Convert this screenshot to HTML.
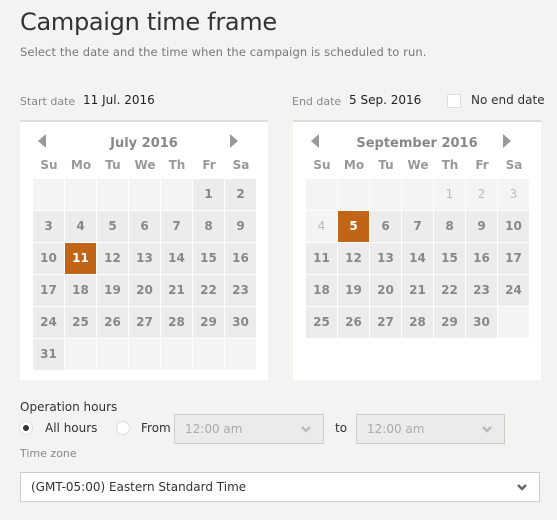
<!DOCTYPE html>
<html><head><style>
*{box-sizing:border-box;margin:0;padding:0}
body{width:557px;height:520px;background:#f3f3f2;font-family:"DejaVu Sans","Liberation Sans",sans-serif;color:#333;position:relative;overflow:hidden}
.abs{position:absolute}
h1{position:absolute;left:20px;top:8px;font-size:24px;font-weight:normal;color:#333;letter-spacing:-0.3px}
.sub{left:20px;top:45px;font-size:11.5px;color:#777;letter-spacing:0.1px}
.lbl{font-size:11px;color:#888}
.val{font-size:12px;color:#222}
.panel{position:absolute;top:120px;width:248px;height:260px;background:#fff;border-top:2px solid #ddd}
.title{position:absolute;top:14px;left:0;width:248px;text-align:center;font-size:13px;font-weight:bold;color:#888}
.arr{position:absolute;top:12px;width:0;height:0;border-top:7px solid transparent;border-bottom:7px solid transparent}
.al{left:18px;border-right:8px solid #999}
.ar{right:30px;border-left:8px solid #999}
.wd{position:absolute;top:36px;left:13px;width:224px;display:flex}
.wd span{width:32px;text-align:center;font-size:12px;font-weight:bold;color:#999}
.grid{position:absolute;top:57px;left:13px;width:224px;display:grid;grid-template-columns:repeat(7,31px);grid-auto-rows:31px;gap:1px}
.grid div{background:#ececec;text-align:center;line-height:31px;font-size:12px;font-weight:bold;color:#888}
.grid .e{background:#f4f4f4}
.grid .d{background:#f4f4f4;color:#bbb;font-weight:normal}
.grid .s{background:#c06515;color:#fff}
.sel{position:absolute;height:30px;border:1px solid #ccc;background:#ebebeb;font-size:12px;color:#aaa;padding-left:10px;line-height:28px}
.chev{position:absolute;right:12px;top:10px}
.radio{position:absolute;width:14px;height:14px;border-radius:50%;border:1px solid #ddd;background:#fff}
</style></head><body>
<h1>Campaign time frame</h1>
<div class="abs sub">Select the date and the time when the campaign is scheduled to run.</div>

<div class="abs lbl" style="left:20px;top:95px">Start date</div>
<div class="abs val" style="left:83px;top:93px">11 Jul. 2016</div>
<div class="abs lbl" style="left:292px;top:95px">End date</div>
<div class="abs val" style="left:349px;top:93px">5 Sep. 2016</div>
<div class="abs" style="left:447px;top:94px;width:14px;height:14px;border:1px solid #ddd;background:#fff;border-radius:2px"></div>
<div class="abs val" style="left:471px;top:93px;color:#333">No end date</div>

<div class="panel" style="left:20px">
<div class="arr al"></div><div class="arr ar"></div>
<div class="title">July 2016</div>
<div class="wd"><span>Su</span><span>Mo</span><span>Tu</span><span>We</span><span>Th</span><span>Fr</span><span>Sa</span></div>
<div class="grid">
<div class="e"></div><div class="e"></div><div class="e"></div><div class="e"></div><div class="e"></div><div>1</div><div>2</div>
<div>3</div><div>4</div><div>5</div><div>6</div><div>7</div><div>8</div><div>9</div>
<div>10</div><div class="s">11</div><div>12</div><div>13</div><div>14</div><div>15</div><div>16</div>
<div>17</div><div>18</div><div>19</div><div>20</div><div>21</div><div>22</div><div>23</div>
<div>24</div><div>25</div><div>26</div><div>27</div><div>28</div><div>29</div><div>30</div>
<div>31</div><div class="e"></div><div class="e"></div><div class="e"></div><div class="e"></div><div class="e"></div><div class="e"></div>
</div></div>

<div class="panel" style="left:293px">
<div class="arr al"></div><div class="arr ar"></div>
<div class="title">September 2016</div>
<div class="wd"><span>Su</span><span>Mo</span><span>Tu</span><span>We</span><span>Th</span><span>Fr</span><span>Sa</span></div>
<div class="grid">
<div class="e"></div><div class="e"></div><div class="e"></div><div class="e"></div><div class="d">1</div><div class="d">2</div><div class="d">3</div>
<div class="d">4</div><div class="s">5</div><div>6</div><div>7</div><div>8</div><div>9</div><div>10</div>
<div>11</div><div>12</div><div>13</div><div>14</div><div>15</div><div>16</div><div>17</div>
<div>18</div><div>19</div><div>20</div><div>21</div><div>22</div><div>23</div><div>24</div>
<div>25</div><div>26</div><div>27</div><div>28</div><div>29</div><div>30</div><div class="e"></div>
</div></div>

<div class="abs val" style="left:20px;top:400px;color:#333">Operation hours</div>
<div class="radio" style="left:19px;top:421px"></div>
<div class="abs" style="left:23px;top:425px;width:6px;height:6px;border-radius:50%;background:#333"></div>
<div class="abs val" style="left:45px;top:421px;color:#333">All hours</div>
<div class="radio" style="left:116px;top:421px"></div>
<div class="abs val" style="left:141px;top:421px;color:#333">From</div>
<div class="sel" style="left:174px;top:414px;width:150px">12:00 am<svg class="chev" width="10" height="8" viewBox="0 0 10 8"><path d="M1 2 L5 6 L9 2" stroke="#bbb" stroke-width="2.5" fill="none"/></svg></div>
<div class="abs val" style="left:335px;top:421px;color:#333">to</div>
<div class="sel" style="left:356px;top:414px;width:149px">12:00 am<svg class="chev" width="10" height="8" viewBox="0 0 10 8"><path d="M1 2 L5 6 L9 2" stroke="#bbb" stroke-width="2.5" fill="none"/></svg></div>
<div class="abs lbl" style="left:20px;top:447px">Time zone</div>
<div class="sel" style="left:20px;top:472px;width:520px;background:#fff;color:#333">(GMT-05:00) Eastern Standard Time<svg class="chev" width="10" height="8" viewBox="0 0 10 8"><path d="M1 2 L5 6 L9 2" stroke="#666" stroke-width="2.5" fill="none"/></svg></div>
</body></html>
